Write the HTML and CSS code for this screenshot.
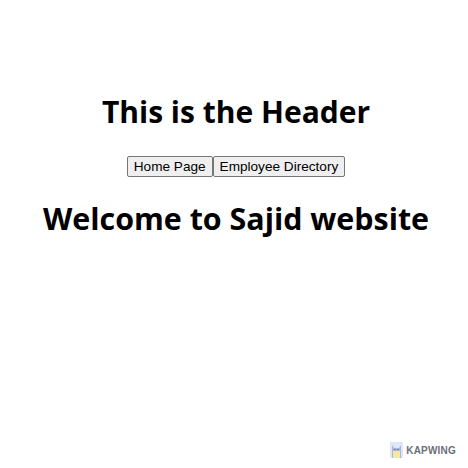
FILE: index.html
```html
<!DOCTYPE html>
<html>
<head>
<meta charset="utf-8">
<link rel="stylesheet" href="styles.css">
</head>
<body>
<div class="page">
  <h1 class="header">This is the Header</h1>
  <nav class="nav">
    <button class="btn">Home Page</button><button class="btn">Employee Directory</button>
  </nav>
  <h1 class="welcome">Welcome to Sajid website</h1>
</div>
<div class="watermark">
  <svg class="wm-icon" width="13" height="16" viewBox="0 0 13 16">
    <rect x="0" y="0" width="13" height="16" fill="#dfe6f5"/>
    <path d="M2 3 L4 6 L9 6 L11 3 L11 16 L2 16 Z" fill="#a9b8d8"/>
    <rect x="3" y="9" width="7" height="7" fill="#f6e7a6"/>
    <rect x="4.5" y="7" width="1" height="1" fill="#4a4f66"/>
    <rect x="7.5" y="7" width="1" height="1" fill="#4a4f66"/>
  </svg>
  <span class="wm-text">KAPWING</span>
</div>
</body>
</html>
```
FILE: styles.css
```css
html, body {
  margin: 0;
  padding: 0;
  background: #ffffff;
}
body {
  width: 468px;
  height: 468px;
  position: relative;
  overflow: hidden;
  font-family: "Open Sans", sans-serif;
}
.page {
  display: flex;
  flex-direction: column;
  align-items: center;
  padding-top: 92px;
}
.header {
  margin: 0 0 0 4px;
  font-size: 30px;
  font-weight: 700;
  line-height: 40px;
  color: #000;
}
.nav {
  display: flex;
  margin: 24px 0 0 4px;
}
.btn {
  font-family: "Liberation Sans", Arial, sans-serif;
  font-size: 13.6px;
  color: #000;
  background: #efefef;
  border: 1px solid #767676;
  border-radius: 2px;
  padding: 1px 6px;
  height: 21px;
  margin: 0;
}
.welcome {
  margin: 20px 0 0 4px;
  font-size: 30.4px;
  font-weight: 700;
  line-height: 44px;
  color: #000;
}
.watermark {
  position: absolute;
  right: 12px;
  bottom: 10px;
  display: flex;
  align-items: center;
  gap: 3px;
}
.wm-text {
  font-family: "Liberation Sans", Arial, sans-serif;
  font-weight: 700;
  font-size: 10px;
  color: #6b6f7a;
  letter-spacing: 0.2px;
}
```
